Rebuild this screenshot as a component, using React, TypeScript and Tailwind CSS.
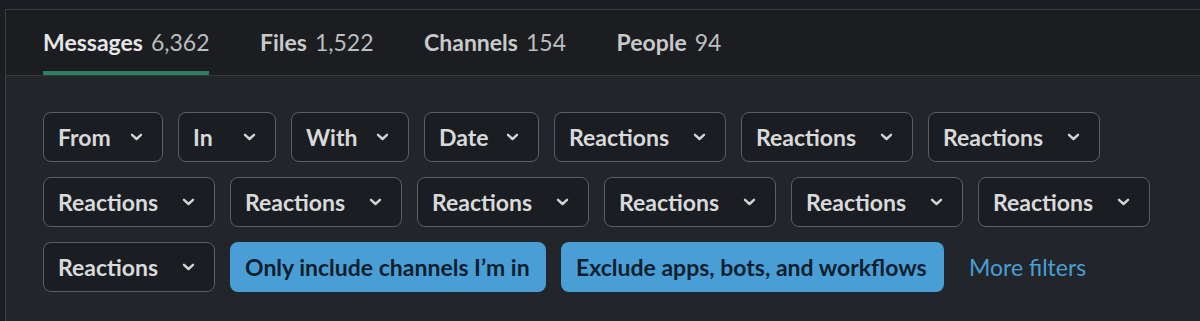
import React from "react";

const Chevron = ({ color = "#d1d2d3" }: { color?: string }) => (
  <svg width="13" height="8" viewBox="0 0 13 8" fill="none" className="shrink-0">
    <path d="M2 1.8 L6.5 6 L11 1.8" stroke={color} strokeWidth="2.4" strokeLinecap="round" strokeLinejoin="round" />
  </svg>
);

const tabs = [
  { label: "Messages", count: "6,362", active: true },
  { label: "Files", count: "1,522" },
  { label: "Channels", count: "154" },
  { label: "People", count: "94" },
];

const filters: { label: string; w: string }[] = [
  { label: "From", w: "w-[120px]" },
  { label: "In", w: "w-[98px]" },
  { label: "With", w: "w-[118px]" },
  { label: "Date", w: "w-[115px]" },
  { label: "Reactions", w: "w-[172px]" },
  { label: "Reactions", w: "w-[172px]" },
  { label: "Reactions", w: "w-[172px]" },
  { label: "Reactions", w: "w-[172px]" },
  { label: "Reactions", w: "w-[172px]" },
  { label: "Reactions", w: "w-[172px]" },
  { label: "Reactions", w: "w-[172px]" },
  { label: "Reactions", w: "w-[172px]" },
  { label: "Reactions", w: "w-[172px]" },
  { label: "Reactions", w: "w-[172px]" },
];

export default function App() {
  return (
    <div
      className="w-[1200px] h-[321px] bg-[#1a1d21] overflow-hidden pl-[5px] pt-[9px]"
      style={{ fontFamily: "Lato, 'Noto Sans', sans-serif" }}
    >
      <div className="h-full border-l border-t border-[#3a3c40] bg-[#222529] flex flex-col">
        <div className="h-[66px] bg-[#1b1d21] border-b border-[#35373b] flex items-stretch gap-[50.5px] pl-[37px] shrink-0">
          {tabs.map((t) => (
            <div
              key={t.label}
              className={
                "flex items-center pt-[3px] border-b-[4px] text-[23px] leading-none " +
                (t.active ? "border-[#2f7d62] text-[#e6e6e6]" : "border-transparent text-[#c8c9ca]")
              }
            >
              <span className="font-bold">{t.label}</span>
              <span className="ml-[8px] font-normal text-[#bdbebf]">{t.count}</span>
            </div>
          ))}
        </div>
        <div className="flex flex-wrap gap-x-[15px] gap-y-[15px] pl-[37px] pr-[40px] pt-[36px]">
          {filters.map((f, i) => (
            <div
              key={i}
              className={
                f.w +
                " h-[50px] rounded-[8px] border-[1.5px] border-[#5b5e62] bg-[#1a1d21] flex items-center justify-between pl-[14px] pr-[19px] text-[23px] font-bold text-[#d8d9da]"
              }
            >
              <span>{f.label}</span>
              <Chevron />
            </div>
          ))}
          <div className="w-[316px] h-[50px] rounded-[8px] bg-[#4a9ed6] flex items-center pl-[15px] text-[23px] font-bold text-[#0f1f2e] whitespace-nowrap">
            Only include channels I’m in
          </div>
          <div className="w-[383px] h-[50px] rounded-[8px] bg-[#4a9ed6] flex items-center pl-[15px] text-[23px] font-bold text-[#0f1f2e] whitespace-nowrap">
            Exclude apps, bots, and workflows
          </div>
          <div className="h-[50px] flex items-center pl-[10px] text-[23px] text-[#4a9ed6]">More filters</div>
        </div>
      </div>
    </div>
  );
}
